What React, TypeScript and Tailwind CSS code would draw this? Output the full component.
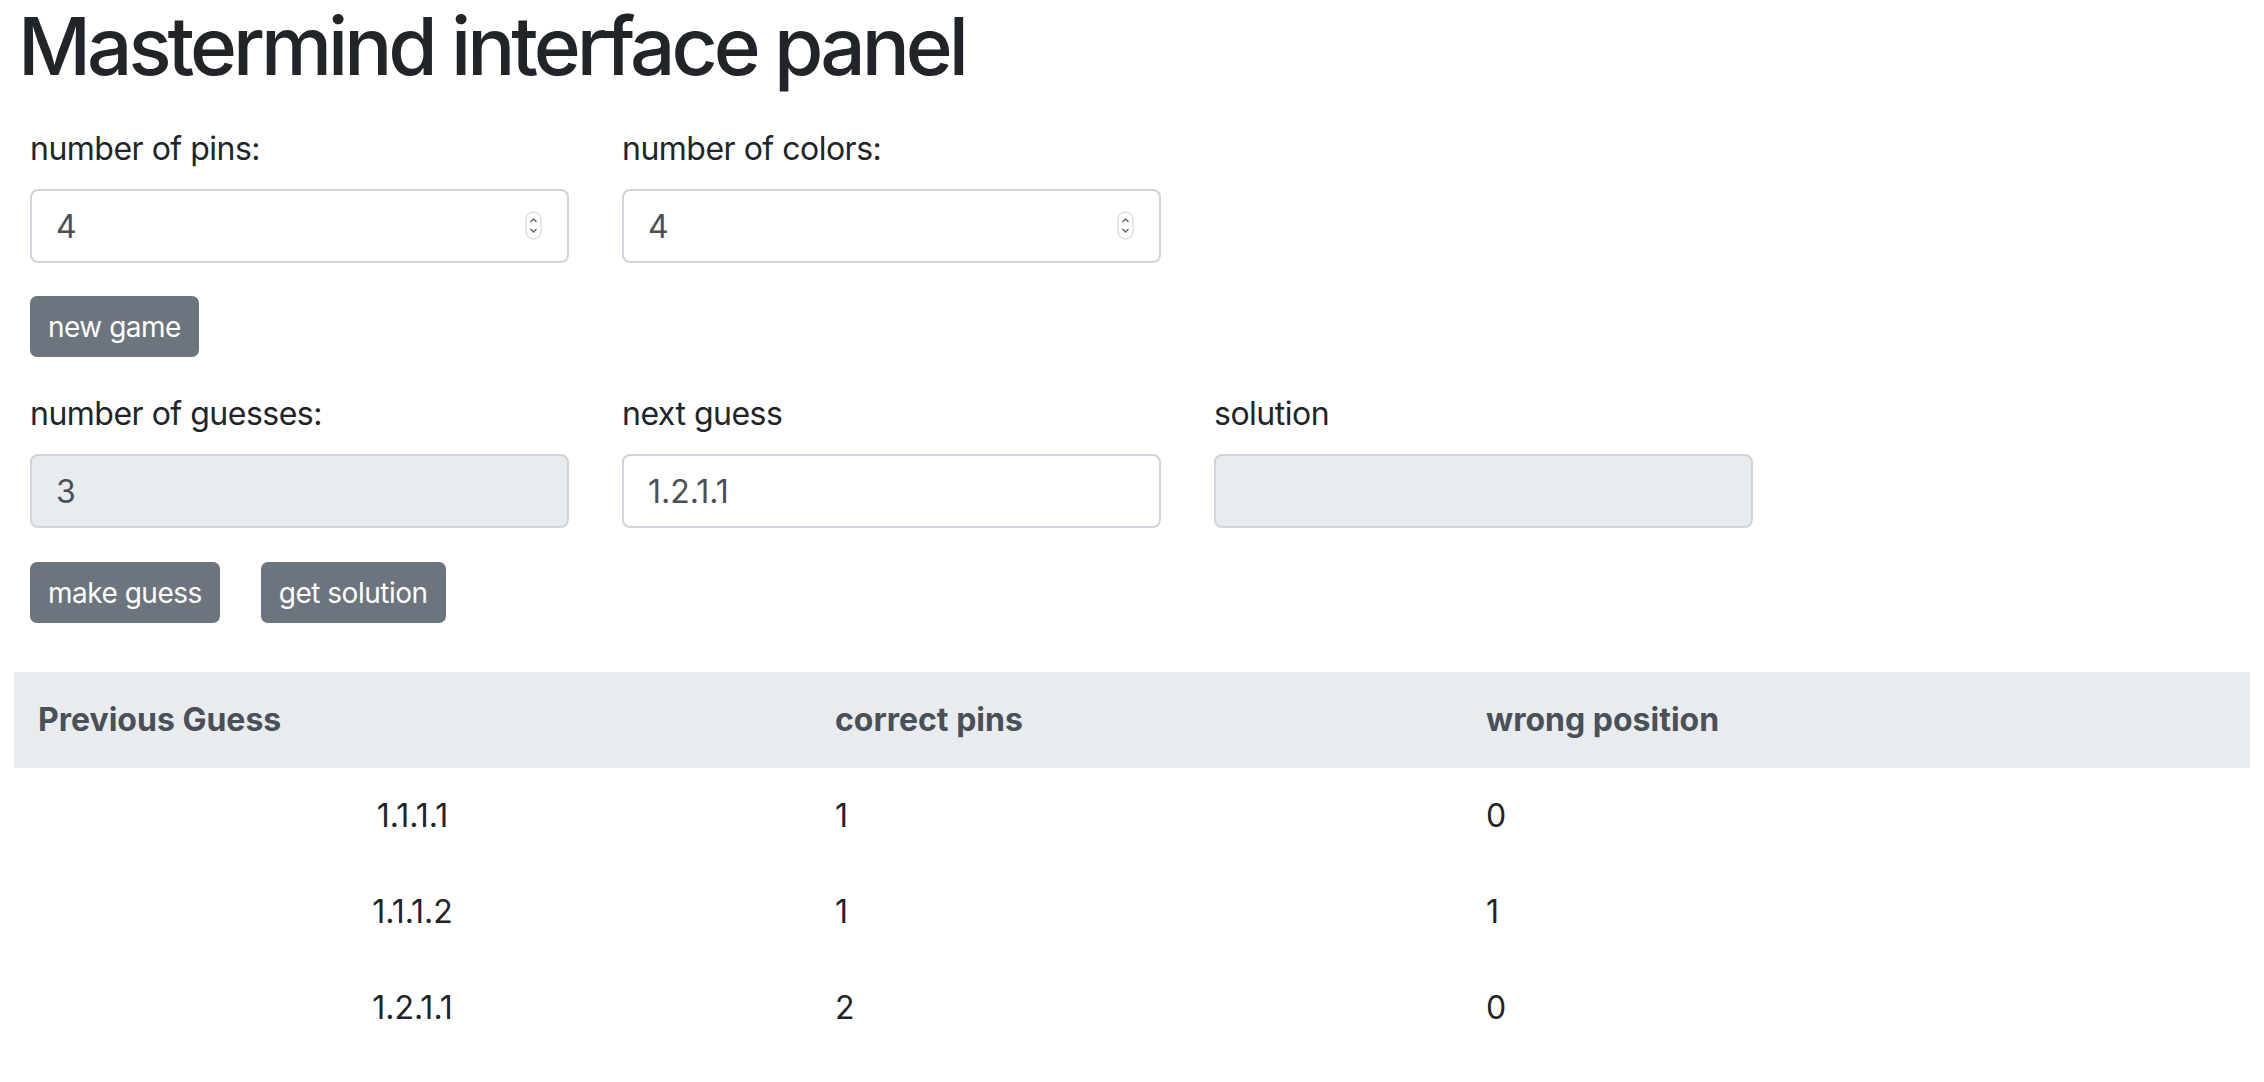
import React from "react";

const font = { fontFamily: "Inter, 'Liberation Sans', sans-serif" };

const guesses = [
  { guess: "1.1.1.1", correct: 1, wrong: 0 },
  { guess: "1.1.1.2", correct: 1, wrong: 1 },
  { guess: "1.2.1.1", correct: 2, wrong: 0 },
];

function Spinner() {
  return (
    <svg
      className="absolute right-[27px] top-[22px]"
      width="17"
      height="29"
      viewBox="0 0 17 29"
      aria-hidden
    >
      <rect x="1" y="1" width="15" height="27" rx="7.5" fill="#fff" stroke="#c9ccd0" strokeWidth="1" />
      <path d="M5.5 11 L8.5 8 L11.5 11" fill="none" stroke="#5b6168" strokeWidth="1.3" />
      <path d="M5.5 18 L8.5 21 L11.5 18" fill="none" stroke="#5b6168" strokeWidth="1.3" />
    </svg>
  );
}

function Field({
  label,
  value,
  disabled,
  spinner,
}: {
  label: string;
  value: string;
  disabled?: boolean;
  spinner?: boolean;
}) {
  return (
    <div className="w-[539px] flex flex-col">
      <label className="text-[32px] leading-[48px] tracking-[-0.5px] text-[#212529] mb-[16px]">
        {label}
      </label>
      <div className="relative">
        <input
          type="text"
          readOnly
          value={value}
          style={font}
          className={
            "w-full h-[74px] rounded-[8px] border-2 border-[#ced4da] px-[24px] text-[32px] text-[#495057] outline-none " +
            (disabled ? "bg-[#e9ecef]" : "bg-white")
          }
        />
        {spinner && <Spinner />}
      </div>
    </div>
  );
}

function Btn({ children }: { children: React.ReactNode }) {
  return (
    <button
      style={font}
      className="h-[61px] px-[18px] rounded-[7px] bg-[#6c757d] text-white text-[28px] leading-[42px] tracking-[-0.5px]"
    >
      {children}
    </button>
  );
}

export default function App() {
  return (
    <div style={font} className="min-h-screen bg-white px-[14px] text-[#212529]">
      <h1 className="text-[80px] leading-[92px] font-medium tracking-[-4px] text-[#212529] pl-[4px]">
        Mastermind interface panel
      </h1>

      <div className="pl-[16px]">
        <div className="flex gap-[53px] mt-[33px]">
          <Field label="number of pins:" value="4" spinner />
          <Field label="number of colors:" value="4" spinner />
        </div>
        <div className="mt-[33px] flex">
          <Btn>new game</Btn>
        </div>

        <div className="flex gap-[53px] mt-[33px]">
          <Field label="number of guesses:" value="3" disabled />
          <Field label="next guess" value="1.2.1.1" />
          <Field label="solution" value="" disabled />
        </div>
        <div className="mt-[34px] flex gap-[41px]">
          <Btn>make guess</Btn>
          <Btn>get solution</Btn>
        </div>
      </div>

      <table className="w-full mt-[49px] border-collapse text-[32px]">
        <thead>
          <tr className="bg-[#e9ecef] text-[#495057]">
            <th className="w-[797px] h-[96px] px-[24px] text-left font-bold">Previous Guess</th>
            <th className="w-[651px] h-[96px] px-[24px] text-left font-bold">correct pins</th>
            <th className="h-[96px] px-[24px] text-left font-bold">wrong position</th>
          </tr>
        </thead>
        <tbody>
          {guesses.map((g) => (
            <tr key={g.guess} className="text-[#212529]">
              <td className="h-[96px] px-[24px] text-center">{g.guess}</td>
              <td className="h-[96px] px-[24px]">{g.correct}</td>
              <td className="h-[96px] px-[24px]">{g.wrong}</td>
            </tr>
          ))}
        </tbody>
      </table>
    </div>
  );
}
